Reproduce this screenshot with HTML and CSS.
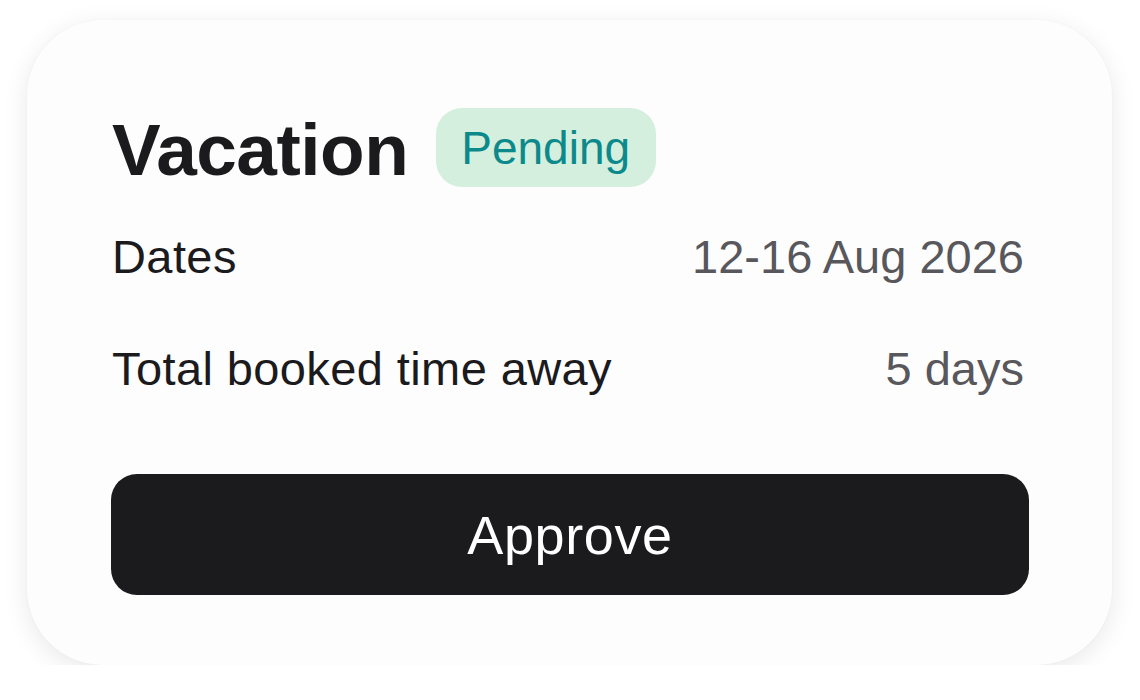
FILE: index.html
```html
<!DOCTYPE html>
<html lang="en">
<head>
<meta charset="utf-8">
<title>Vacation request</title>
<link rel="stylesheet" href="styles.css">
</head>
<body>
<div class="card">
  <div class="header">
    <h1 class="title">Vacation</h1>
    <span class="badge">Pending</span>
  </div>
  <div class="rows">
    <div class="row">
      <span class="label">Dates</span>
      <span class="value">12-16 Aug 2026</span>
    </div>
    <div class="row">
      <span class="label">Total booked time away</span>
      <span class="value">5 days</span>
    </div>
  </div>
  <button class="approve" type="button">Approve</button>
</div>
</body>
</html>
```

FILE: styles.css
```css
html, body {
  margin: 0;
  padding: 0;
  background: #ffffff;
}
body {
  font-family: "Liberation Sans", Arial, sans-serif;
  color: #1b1a1d;
}
.card {
  box-sizing: border-box;
  width: 1085px;
  height: 645px;
  margin: 20px 0 0 27px;
  padding: 88px 83px 70px 84px;
  background: #fdfdfd;
  border-radius: 76px;
  box-shadow: 0 6px 26px rgba(0, 0, 0, 0.09), 0 0 3px rgba(0, 0, 0, 0.03);
  display: flex;
  flex-direction: column;
}
.header {
  display: flex;
  align-items: center;
  height: 79px;
  gap: 28px;
}
.title {
  margin: 0 0 0 1px;
  font-size: 73px;
  font-weight: 700;
  line-height: 1;
  letter-spacing: -0.5px;
  position: relative;
  top: 2px;
}
.badge {
  display: flex;
  align-items: center;
  height: 79px;
  box-sizing: border-box;
  padding: 0 26px 0 25px;
  background: #d4efdd;
  color: #0b898b;
  font-size: 46px;
  border-radius: 26px;
}
.rows {
  margin-top: 42px;
  display: flex;
  flex-direction: column;
  gap: 56px;
  padding-left: 1px;
}
.row {
  display: flex;
  justify-content: space-between;
  align-items: center;
  height: 56px;
  padding-right: 5px;
  font-size: 47px;
  line-height: 56px;
}
.label {
  color: #1b1a1d;
  letter-spacing: 0.4px;
}
.value {
  color: #58575c;
}
.approve {
  margin-top: 77px;
  width: 918px;
  height: 121px;
  border: none;
  border-radius: 26px;
  background: #1b1a1d;
  color: #ffffff;
  font-family: "Liberation Sans", Arial, sans-serif;
  font-size: 54px;
  letter-spacing: 0.6px;
  padding: 0;
  cursor: pointer;
}
```
